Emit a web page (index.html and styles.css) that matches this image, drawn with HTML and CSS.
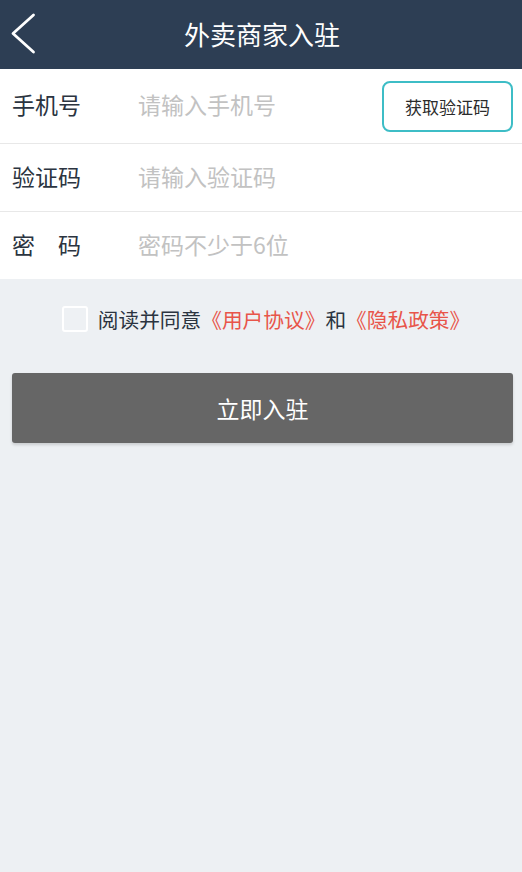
FILE: index.html
```html
<!DOCTYPE html>
<html lang="zh-CN">
<head>
<meta charset="utf-8">
<link rel="stylesheet" href="styles.css">
</head>
<body>
<header class="topbar">
  <svg class="back" width="40" height="69" viewBox="0 0 40 69"><polyline points="33.5,15 13,33.5 33.5,52" fill="none" stroke="#fff" stroke-width="2.8" stroke-linecap="round" stroke-linejoin="round"/></svg>
  <h1 class="title">外卖商家入驻</h1>
</header>
<section class="form">
  <div class="row">
    <span class="label">手机号</span>
    <span class="placeholder">请输入手机号</span>
    <button class="code-btn">获取验证码</button>
  </div>
  <div class="row">
    <span class="label">验证码</span>
    <span class="placeholder">请输入验证码</span>
  </div>
  <div class="row">
    <span class="label">密　码</span>
    <span class="placeholder">密码不少于6位</span>
  </div>
</section>
<div class="agree">
  <span class="check"></span>
  <span class="agree-text">阅读并同意<span class="link">《用户协议》</span>和<span class="link">《隐私政策》</span></span>
</div>
<div class="submit-wrap">
  <button class="submit">立即入驻</button>
</div>
</body>
</html>
```
FILE: styles.css
```css
html, body {
  margin: 0;
  padding: 0;
  background: #edf0f3;
  font-family: "Noto Sans CJK SC", "Noto Sans", sans-serif;
  height: 100%;
}
.topbar {
  height: 69px;
  background: #2d3e54;
  display: flex;
  align-items: center;
  justify-content: center;
  position: relative;
}
.back {
  position: absolute;
  left: 0;
  top: 0;
}
.title {
  margin: 0 0 2px 2px;
  color: #fff;
  font-size: 26px;
  font-weight: 400;
  line-height: 1;
}
.form {
  background: #fff;
}
.row {
  display: flex;
  align-items: center;
  padding: 0 9px 0 12px;
  height: 67px;
  border-top: 1px solid #e8e8e8;
}
.row:first-child {
  height: 74px;
  border-top: none;
}
.label {
  width: 126px;
  font-size: 23px;
  color: #2b3440;
  line-height: 1;
  margin-bottom: 3px;
}
.placeholder {
  flex: 1;
  font-size: 23px;
  color: #c2c2c2;
  line-height: 1;
  margin-bottom: 3px;
}
.code-btn {
  width: 131px;
  height: 51px;
  margin-top: 1px;
  border: 2px solid #3dbdc6;
  border-radius: 8px;
  background: #fff;
  font-family: inherit;
  font-size: 17px;
  color: #2b2b2b;
  padding: 0;
}
.agree {
  display: flex;
  align-items: center;
  justify-content: center;
  height: 84px;
  padding-left: 10px;
  padding-bottom: 4px;
  box-sizing: border-box;
}
.check {
  width: 22px;
  height: 22px;
  border: 2px solid #fff;
  border-radius: 3px;
  background: #eef1f4;
  margin-right: 10px;
}
.agree-text {
  font-size: 20.7px;
  color: #2b3440;
  line-height: 1;
}
.link {
  color: #e8554a;
}
.submit-wrap {
  padding: 10px 9px 0 12px;
}
.submit {
  width: 100%;
  height: 70px;
  border: none;
  border-radius: 3px;
  background: #666;
  color: #fff;
  font-family: inherit;
  font-size: 23px;
  box-shadow: 0 2px 3px rgba(0,0,0,0.15);
  padding: 0;
}
```
